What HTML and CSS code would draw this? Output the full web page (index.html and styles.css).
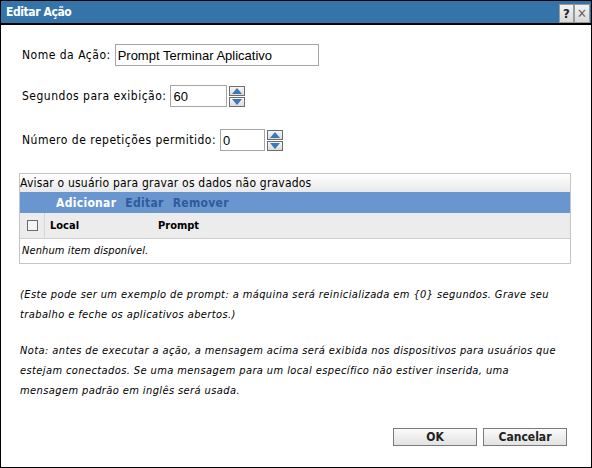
FILE: index.html
```html
<!DOCTYPE html>
<html lang="pt">
<head>
    <meta charset="UTF-8">
    <title>Editar Ação</title>
    <link rel="stylesheet" href="styles.css">
</head>
<body>
    <div class="dialog">
        <div class="titlebar">
            <span class="title">Editar Ação</span>
            <span class="tbtns">
                <span class="tbtn">?</span>
                <span class="tbtn close">&#x2715;</span>
            </span>
        </div>

        <div class="content">
            <div class="field f1">
                <label>Nome da Ação:</label>
                <input class="txt name" type="text" value="Prompt Terminar Aplicativo">
            </div>
            <div class="field f2">
                <label>Segundos para exibição:</label>
                <input class="txt num" type="text" value="60">
                <span class="spin">
                    <span class="up"></span>
                    <span class="down"></span>
                </span>
            </div>
            <div class="field f3">
                <label>Número de repetições permitido:</label>
                <input class="txt num" type="text" value="0">
                <span class="spin">
                    <span class="up"></span>
                    <span class="down"></span>
                </span>
            </div>

            <div class="grid">
                <div class="grid-title">Avisar o usuário para gravar os dados não gravados</div>
                <div class="toolbar">
                    <span class="on">Adicionar</span>
                    <span>Editar</span>
                    <span>Remover</span>
                </div>
                <div class="cols">
                    <span class="chk-cell"><span class="chk"></span></span>
                    <span class="col-local">Local</span>
                    <span>Prompt</span>
                </div>
                <div class="empty">Nenhum item disponível.</div>
            </div>

            <p class="note">(Este pode ser um exemplo de prompt: a máquina será reinicializada em {0} segundos. Grave seu trabalho e feche os aplicativos abertos.)</p>
            <p class="note">Nota: antes de executar a ação, a mensagem acima será exibida nos dispositivos para usuários que estejam conectados. Se uma mensagem para um local específico não estiver inserida, uma mensagem padrão em inglês será usada.</p>

            <div class="actions">
                <button>OK</button>
                <button>Cancelar</button>
            </div>
        </div>
    </div>
</body>
</html>
```

FILE: styles.css
```css
html, body {
    margin: 0;
    padding: 0;
}
body {
    font-family: "DejaVu Sans Condensed", "DejaVu Sans", sans-serif;
    font-size: 12px;
    color: #000;
    background: #fff;
}
.dialog {
    width: 590px;
    height: 466px;
    border: 1px solid #000;
}
.titlebar {
    height: 22px;
    background: #3574a8;
    border-bottom: 2px solid #000;
    display: flex;
    align-items: center;
    justify-content: space-between;
    padding: 0 1px 0 5px;
}
.title {
    color: #fff;
    font-weight: bold;
    font-size: 12px;
    letter-spacing: -0.4px;
}
.tbtns {
    display: flex;
    margin-top: 2px;
}
.tbtn {
    width: 13px;
    height: 17px;
    background: linear-gradient(#f4f4f4, #d8d8d8);
    border: 1px solid #9a9a9a;
    color: #222;
    font-weight: bold;
    font-size: 13px;
    line-height: 17px;
    text-align: center;
}
.tbtn.close {
    width: 14px;
    color: #666;
    font-weight: normal;
}
.content {
    padding: 19px 20px 0 18px;
}
.field {
    display: flex;
    align-items: center;
}
.field label {
    padding-left: 3px;
    margin-right: 4px;
    letter-spacing: 0.5px;
}
.f2 {
    margin-top: 19px;
}
.f3 {
    margin-top: 22px;
}
.txt {
    font-family: "Liberation Sans", Arial, sans-serif;
    font-size: 13px;
    height: 22px;
    box-sizing: border-box;
    border: 1px solid #a5a5a5;
    padding: 0 2px;
    margin: 0;
    outline: none;
}
.txt.name {
    width: 204px;
}
.txt.num {
    width: 57px;
}
.f3 .txt.num {
    width: 45px;
}
.spin {
    display: flex;
    flex-direction: column;
    gap: 1px;
    margin-left: 2px;
}
.spin span {
    width: 14px;
    height: 8px;
    border: 1px solid #6d6d6d;
    background: linear-gradient(#f6f6f6, #dcdcdc);
    position: relative;
}
.spin span::after {
    content: "";
    position: absolute;
    left: 2px;
    border-left: 5px solid transparent;
    border-right: 5px solid transparent;
}
.spin .up::after {
    top: 1px;
    border-bottom: 6px solid #3b78b8;
}
.spin .down::after {
    top: 1px;
    border-top: 6px solid #3b78b8;
}
.grid {
    margin-top: 22px;
    width: 550px;
    border: 1px solid #c4c4c4;
}
.grid-title {
    height: 18px;
    line-height: 19px;
    letter-spacing: 0.2px;
    background: linear-gradient(#ffffff, #e8e8e8);
}
.toolbar {
    height: 21px;
    background: #6a96cf;
    display: flex;
    align-items: center;
    gap: 9px;
    padding-left: 36px;
    font-weight: bold;
    letter-spacing: 0.3px;
    color: #2d5c9c;
}
.toolbar .on {
    color: #fff;
}
.cols {
    height: 25px;
    background: #ececec;
    display: flex;
    align-items: center;
    font-weight: bold;
    font-size: 11px;
    border-bottom: 1px solid #cfcfcf;
}
.chk-cell {
    width: 24px;
    height: 25px;
    display: flex;
    align-items: center;
    justify-content: center;
    border-right: 1px solid #d6d6d6;
    margin-right: 5px;
}
.chk {
    width: 9px;
    height: 9px;
    border: 1px solid #6b6b6b;
    background: #f4f4f4;
}
.col-local {
    width: 108px;
}
.empty {
    height: 24px;
    line-height: 24px;
    font-style: italic;
    font-size: 11px;
    letter-spacing: 0.1px;
    padding-left: 2px;
}
.note {
    font-style: italic;
    font-size: 11px;
    line-height: 20px;
    letter-spacing: 0.4px;
    margin: 21px 0 0 1px;
}
.note + .note {
    margin-top: 16px;
}
.actions {
    display: flex;
    justify-content: flex-end;
    gap: 6px;
    margin-top: 27px;
    padding-right: 4px;
}
.actions button {
    width: 84px;
    height: 18px;
    font-family: "DejaVu Sans Condensed", "DejaVu Sans", sans-serif;
    font-weight: bold;
    font-size: 12px;
    padding: 0;
    border: 1px solid #7a7a7a;
    background: linear-gradient(#fbfbfb, #e2e2e2);
    color: #222;
}
```
